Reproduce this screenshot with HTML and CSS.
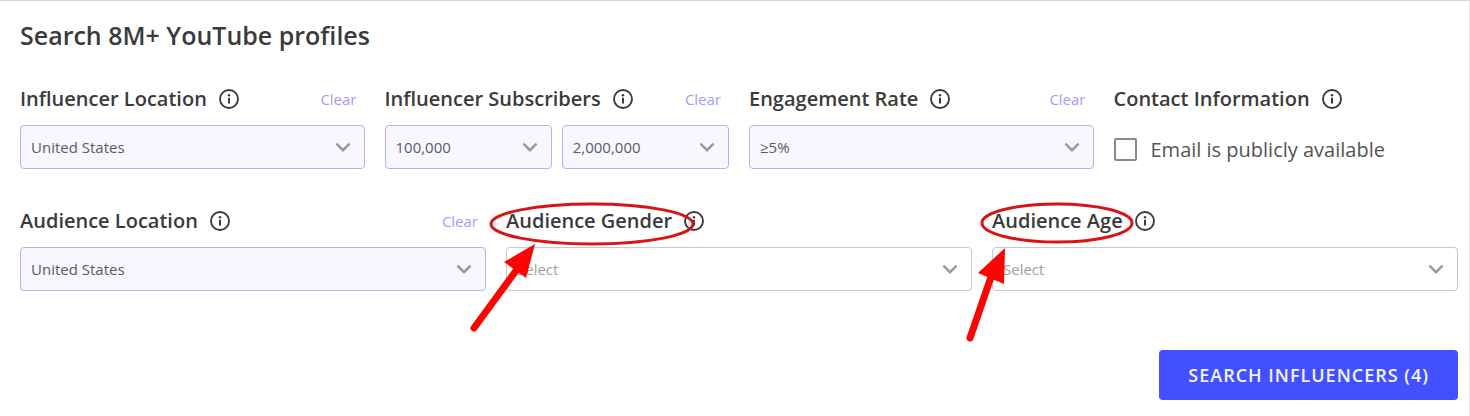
FILE: index.html
```html
<!DOCTYPE html>
<html lang="en">
<head>
<meta charset="utf-8">
<title>Search YouTube profiles</title>
<link rel="stylesheet" href="styles.css">
</head>
<body>
<svg class="sprite" aria-hidden="true">
  <symbol id="info" viewBox="0 0 20 20">
    <circle cx="10" cy="10" r="9" fill="none" stroke="currentColor" stroke-width="1.9"/>
    <circle cx="10" cy="6.2" r="1.2" fill="currentColor"/>
    <path d="M10 8.8V14.6" fill="none" stroke="currentColor" stroke-width="2"/>
  </symbol>
  <symbol id="chevron" viewBox="0 0 16 10">
    <path d="M1.4 1.6L8 8.2L14.6 1.6" fill="none" stroke="currentColor" stroke-width="2.4"/>
  </symbol>
</svg>
<form class="panel">
  <h1 class="title">Search 8M+ YouTube profiles</h1>

  <div class="row row-four">
    <div class="field">
      <div class="field-head">
        <label class="label" for="location">Influencer Location</label>
        <svg class="info"><use href="#info"/></svg>
        <button class="clear" type="button">Clear</button>
      </div>
      <div class="picker">
        <select class="select filled" id="location"><option>United States</option></select>
        <svg class="chevron"><use href="#chevron"/></svg>
      </div>
    </div>
    <div class="field">
      <div class="field-head">
        <label class="label" for="subs-min">Influencer Subscribers</label>
        <svg class="info"><use href="#info"/></svg>
        <button class="clear" type="button">Clear</button>
      </div>
      <div class="range">
        <div class="picker">
          <select class="select filled" id="subs-min"><option>100,000</option></select>
          <svg class="chevron"><use href="#chevron"/></svg>
        </div>
        <div class="picker">
          <select class="select filled" aria-label="Maximum subscribers"><option>2,000,000</option></select>
          <svg class="chevron"><use href="#chevron"/></svg>
        </div>
      </div>
    </div>
    <div class="field">
      <div class="field-head">
        <label class="label" for="rate">Engagement Rate</label>
        <svg class="info"><use href="#info"/></svg>
        <button class="clear" type="button">Clear</button>
      </div>
      <div class="picker">
        <select class="select filled" id="rate"><option>≥5%</option></select>
        <svg class="chevron"><use href="#chevron"/></svg>
      </div>
    </div>
    <div class="field">
      <div class="field-head">
        <span class="label">Contact Information</span>
        <svg class="info"><use href="#info"/></svg>
      </div>
      <label class="check"><input class="box" type="checkbox">Email is publicly available</label>
    </div>
  </div>

  <div class="row row-three">
    <div class="field">
      <div class="field-head">
        <label class="label" for="aud-location">Audience Location</label>
        <svg class="info"><use href="#info"/></svg>
        <button class="clear" type="button">Clear</button>
      </div>
      <div class="picker">
        <select class="select filled" id="aud-location"><option>United States</option></select>
        <svg class="chevron"><use href="#chevron"/></svg>
      </div>
    </div>
    <div class="field">
      <div class="field-head">
        <label class="label" for="gender">Audience Gender</label>
        <svg class="info"><use href="#info"/></svg>
      </div>
      <div class="picker">
        <select class="select" id="gender"><option>Select</option></select>
        <svg class="chevron"><use href="#chevron"/></svg>
      </div>
      <svg class="markup" aria-hidden="true">
        <ellipse class="ring" cx="86" cy="17" rx="101" ry="20"/>
        <path class="shaft" d="M-32 121L12 61"/>
        <path class="head" d="M29 37L-2 55L20 71Z"/>
      </svg>
    </div>
    <div class="field">
      <div class="field-head">
        <label class="label" for="age">Audience Age</label>
        <svg class="info"><use href="#info"/></svg>
      </div>
      <div class="picker">
        <select class="select" id="age"><option>Select</option></select>
        <svg class="chevron"><use href="#chevron"/></svg>
      </div>
      <svg class="markup" aria-hidden="true">
        <ellipse class="ring" cx="65" cy="16" rx="75" ry="19"/>
        <path class="shaft" d="M-22 131L-1 70"/>
        <path class="head" d="M13 41L-14 66L12 77Z"/>
      </svg>
    </div>
  </div>

  <button class="submit" type="submit">SEARCH INFLUENCERS (4)</button>
</form>
</body>
</html>
```
FILE: styles.css
```css
* { box-sizing: border-box; }

body {
  margin: 0;
  background: #fff;
  color: #3b3b3b;
  font-family: "Open Sans", "Noto Sans", sans-serif;
}

button, select, input { font-family: inherit; }

.sprite { position: absolute; width: 0; height: 0; }

.panel {
  display: flex;
  flex-direction: column;
  padding: 18px 11px 16px 20px;
  border-top: 1px solid #d6d6d6;
  border-right: 1px solid #e6e6e6;
}

.title {
  margin: 0 0 34px;
  font-size: 25px;
  line-height: 32px;
  font-weight: 600;
}

.row { display: grid; gap: 20px; }
.row-four { grid-template-columns: repeat(4, minmax(0, 1fr)); margin-bottom: 34px; }
.row-three { grid-template-columns: repeat(3, minmax(0, 1fr)); margin-bottom: 59px; }

.field { position: relative; }

.field-head {
  display: flex;
  align-items: center;
  height: 28px;
  margin-bottom: 12px;
}

.label { font-size: 20px; line-height: 28px; font-weight: 600; }

.info { width: 20px; height: 20px; margin-left: 12px; }

.clear {
  margin-left: auto;
  padding: 0 8px 0 0;
  border: 0;
  background: none;
  color: #9f9ff0;
  font-size: 15px;
  line-height: 28px;
}

.picker { position: relative; }

.range { display: grid; grid-template-columns: 1fr 1fr; gap: 10px; }

.select {
  display: block;
  width: 100%;
  height: 44px;
  padding: 0 40px 0 10px;
  border: 1px solid #c9c9c9;
  border-radius: 4px;
  appearance: none;
  background: #fff;
  color: #a0a0a0;
  font-size: 15px;
}

.filled {
  border-color: #b2b2ee;
  background: #f6f7ff;
  color: #5c5c60;
}

.chevron {
  position: absolute;
  top: 17px;
  right: 14px;
  width: 16px;
  height: 10px;
  color: #999;
  pointer-events: none;
}

.check {
  display: flex;
  align-items: center;
  gap: 14px;
  height: 48px;
  color: #555;
  font-size: 20px;
}

.box {
  width: 23px;
  height: 23px;
  margin: 0;
  border: 2px solid #8a8a8a;
  border-radius: 2px;
  appearance: none;
  background: #fff;
}

.box:checked { background: #4350ff; }

.markup {
  position: absolute;
  top: 0;
  left: 0;
  width: 100%;
  height: 100%;
  overflow: visible;
  pointer-events: none;
}

.ring { fill: none; stroke: #d81414; stroke-width: 3; }
.shaft { fill: none; stroke: #fb0404; stroke-width: 7; stroke-linecap: round; }
.head { fill: #fb0404; }

.submit {
  align-self: flex-end;
  height: 50px;
  padding: 0 29px;
  border: 0;
  border-radius: 4px;
  background: #4350ff;
  color: #f4f4ff;
  font-size: 18px;
  font-weight: 600;
  letter-spacing: 1px;
}
```
